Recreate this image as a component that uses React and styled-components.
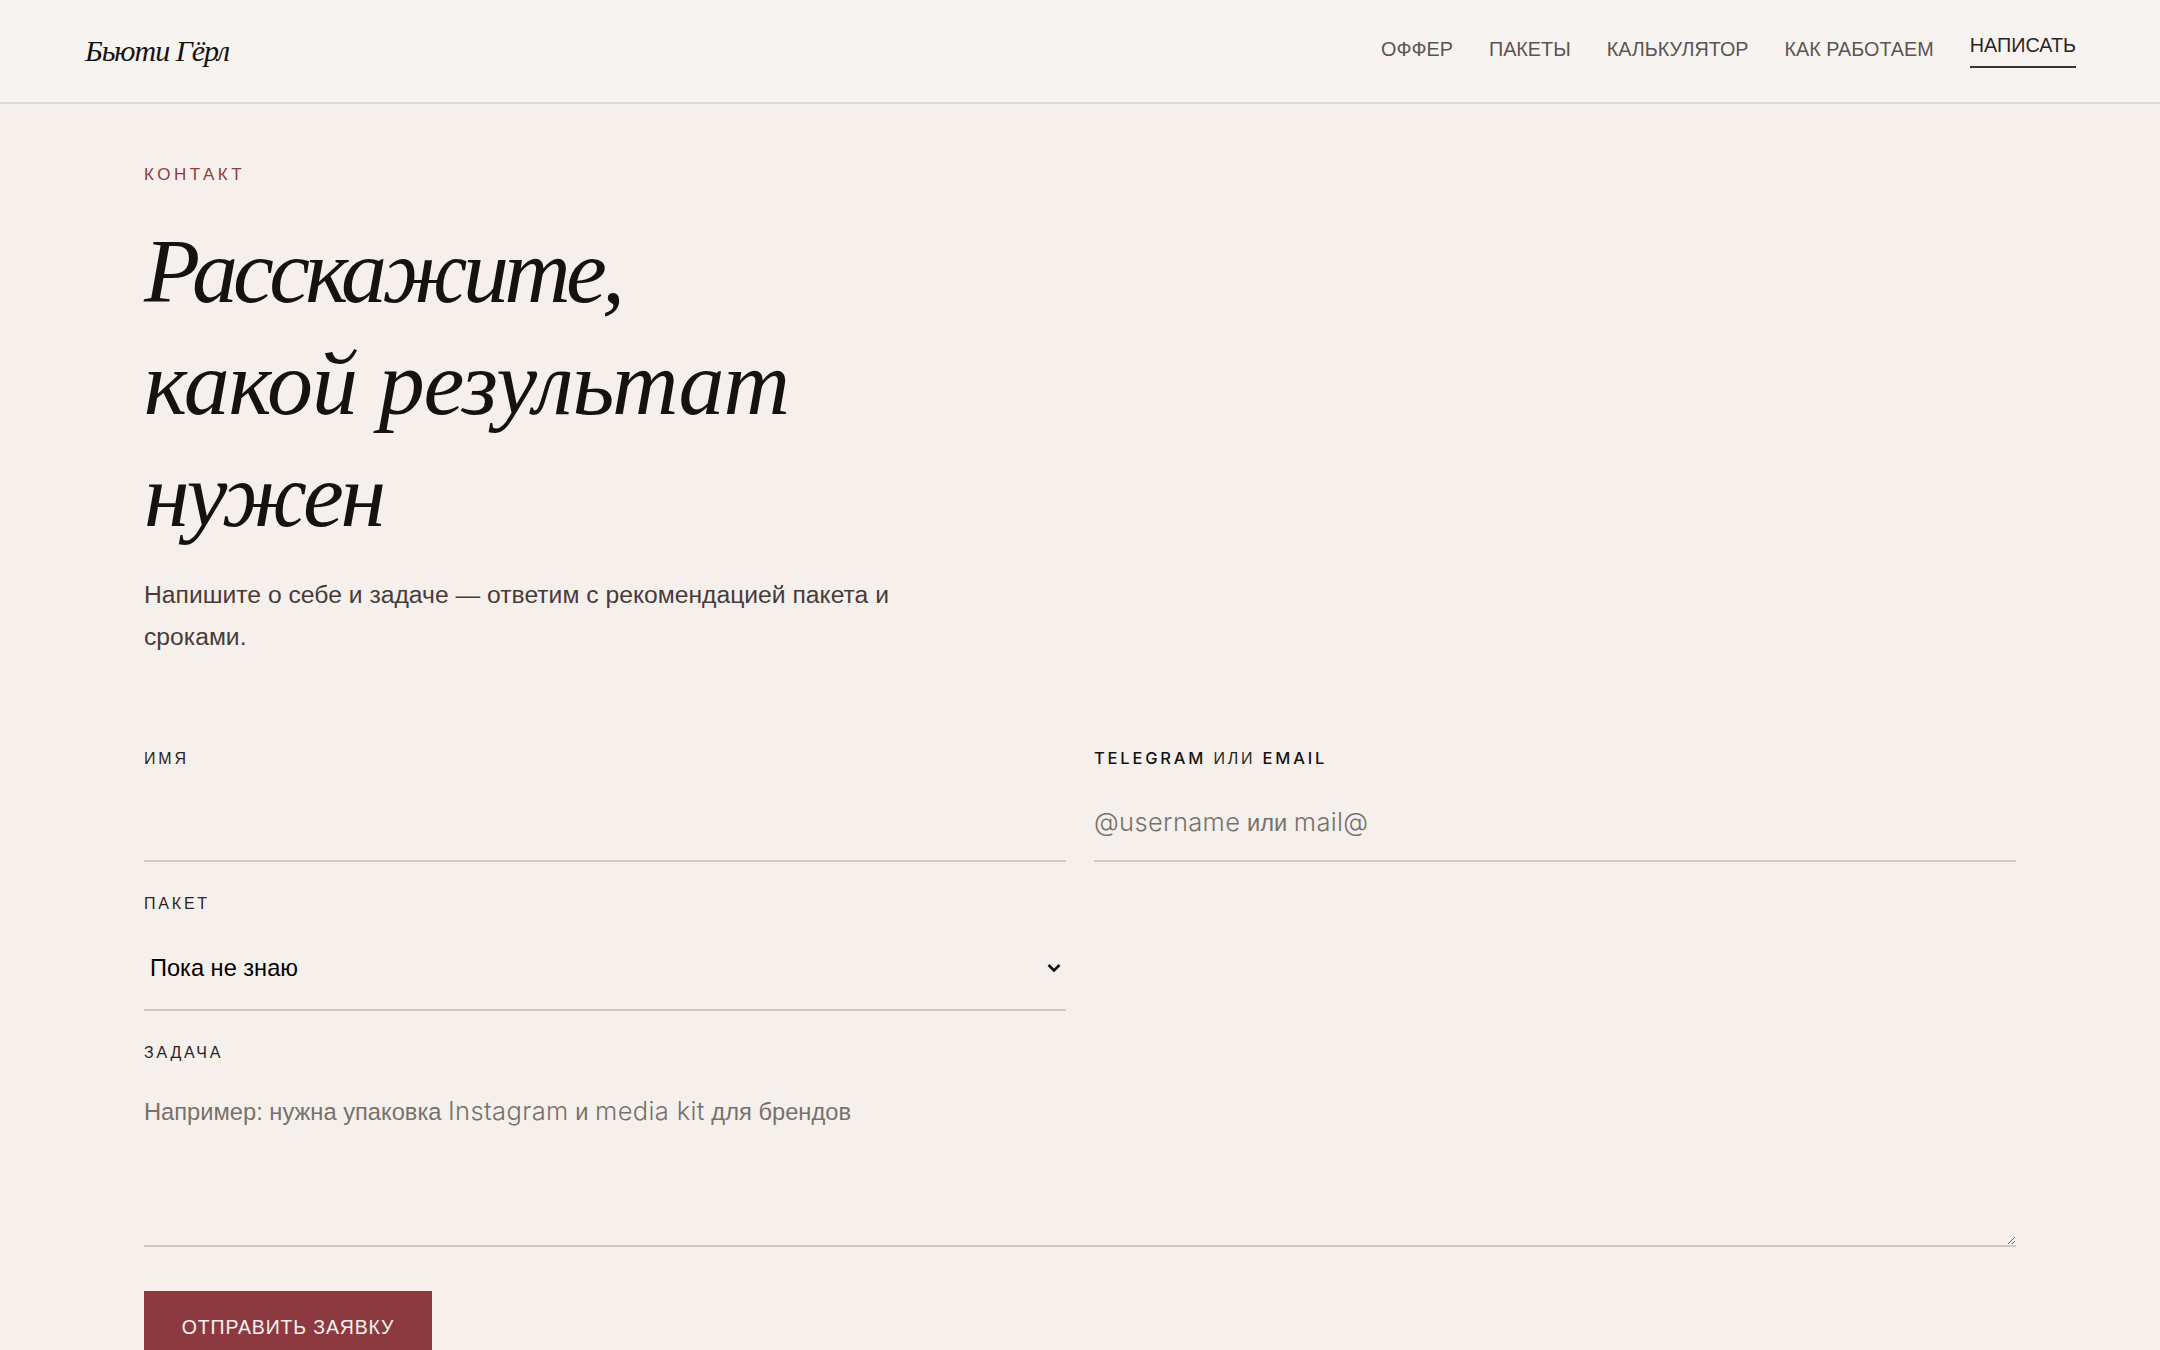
import React from 'react';
import styled, { createGlobalStyle } from 'styled-components';

const GlobalStyle = createGlobalStyle`
  html, body {
    margin: 0;
    padding: 0;
    background: #f5f0ec;
    overflow: hidden;
  }
  * {
    box-sizing: border-box;
  }
`;

const Page = styled.div`
  height: 1350px;
  overflow: hidden;
  font-family: "Liberation Sans", Arial, sans-serif;
  color: #161210;
`;

const Header = styled.header`
  display: flex;
  align-items: center;
  justify-content: space-between;
  height: 104px;
  padding: 0 84px 0 85px;
  background: #f7f3f0;
  border-bottom: 2px solid #dcd8d4;
`;

const Logo = styled.a`
  font-family: "Liberation Serif", serif;
  font-style: italic;
  font-size: 30px;
  letter-spacing: -1px;
  color: #161210;
`;

const Nav = styled.nav`
  display: flex;
  align-items: center;
  gap: 36px;
  margin-bottom: 4px;
`;

const NavLink = styled.a`
  display: block;
  font-size: 19.8px;
  line-height: 30px;
  padding-bottom: ${p => (p.$active ? '6px' : '0')};
  border-bottom: ${p => (p.$active ? '2px solid #3a3431' : '0')};
  color: ${p => (p.$active ? '#2b2522' : '#5c5450')};
`;

const Main = styled.main`
  padding: 60px 144px 0;
`;

const Eyebrow = styled.div`
  font-size: 17px;
  line-height: 22px;
  letter-spacing: 3.5px;
  color: #8f3b42;
`;

const Title = styled.h1`
  margin: 29px 0 0;
  font-family: "Liberation Serif", serif;
  font-style: italic;
  font-weight: 400;
  font-size: 92px;
  line-height: 112px;
  color: #161210;
`;

const TitleLine = styled.span`
  display: block;
  letter-spacing: ${p => p.$tracking}px;
`;

const Lead = styled.p`
  margin: 23px 0 0;
  max-width: 780px;
  font-size: 24.7px;
  line-height: 42px;
  color: #4a3a3a;
`;

const Form = styled.form`
  display: grid;
  grid-template-columns: 1fr 1fr;
  column-gap: 28px;
  row-gap: 32px;
  margin-top: 91px;
`;

const Field = styled.label`
  display: block;
  grid-column: ${p => (p.$wide ? '1 / -1' : 'auto')};
`;

const LabelText = styled.span`
  display: block;
  font-size: 16px;
  line-height: 20px;
  letter-spacing: 2.8px;
  color: #2b2522;
`;

const LatinWord = styled.span`
  font-family: Inter, sans-serif;
  font-weight: 500;
  font-size: 16.5px;
  line-height: 0;
  color: #161210;
`;

const Control = styled.span`
  display: block;
  position: relative;
`;

const lineField = `
  display: block;
  width: 100%;
  border: 0;
  border-bottom: 2px solid #cfcac5;
  border-radius: 0;
  background: transparent;
  outline: none;
  font-family: "Liberation Sans", sans-serif;
  font-size: 24.7px;
  color: #161210;
`;

const TextInput = styled.input`
  ${lineField}
  height: 93px;
  padding: 14px 0 0;
`;

const TextArea = styled.textarea`
  ${lineField}
  height: 184px;
  padding: 33px 0 0;
  resize: vertical;
`;

const Hint = styled.span`
  position: absolute;
  left: 0;
  top: ${p => p.$top}px;
  font-size: 23.7px;
  line-height: 30px;
  color: #77716d;
  pointer-events: none;
  white-space: pre;
  input:not(:placeholder-shown) ~ &,
  textarea:not(:placeholder-shown) ~ & {
    display: none;
  }
`;

const HintLatin = styled.span`
  font-family: Inter, sans-serif;
  font-weight: 300;
  font-size: 25.5px;
  letter-spacing: 0.35px;
`;

const Select = styled.select`
  ${lineField}
  appearance: none;
  height: 85px;
  margin-top: 12px;
  padding: 0 0 0 6px;
  font-size: 23.6px;
  color: #000;
`;

const Chevron = styled.svg`
  position: absolute;
  right: 5px;
  top: 37px;
  width: 14px;
  height: 10px;
  pointer-events: none;
`;

const Submit = styled.button`
  display: block;
  margin-top: 44px;
  width: 288px;
  height: 72px;
  padding: 0;
  border: 0;
  background: #8c3a40;
  color: #f7f3ef;
  font-family: "Liberation Sans", sans-serif;
  font-size: 19.5px;
  letter-spacing: 0.85px;
`;

export default function App() {
  return (
    <Page>
      <GlobalStyle />
      <Header>
        <Logo>Бьюти Гёрл</Logo>
        <Nav>
          <NavLink>ОФФЕР</NavLink>
          <NavLink>ПАКЕТЫ</NavLink>
          <NavLink>КАЛЬКУЛЯТОР</NavLink>
          <NavLink>КАК РАБОТАЕМ</NavLink>
          <NavLink $active>НАПИСАТЬ</NavLink>
        </Nav>
      </Header>
      <Main>
        <Eyebrow>КОНТАКТ</Eyebrow>
        <Title>
          <TitleLine $tracking={-4.8}>Расскажите,</TitleLine>
          <TitleLine $tracking={-1.1}>какой результат</TitleLine>
          <TitleLine $tracking={-3.2}>нужен</TitleLine>
        </Title>
        <Lead>Напишите о себе и задаче — ответим с рекомендацией пакета и сроками.</Lead>
        <Form>
          <Field>
            <LabelText>ИМЯ</LabelText>
            <TextInput type="text" />
          </Field>
          <Field>
            <LabelText>
              <LatinWord>TELEGRAM</LatinWord> ИЛИ <LatinWord>EMAIL</LatinWord>
            </LabelText>
            <Control>
              <TextInput type="text" placeholder=" " />
              <Hint $top={38}>
                <HintLatin>@username</HintLatin> или <HintLatin>mail@</HintLatin>
              </Hint>
            </Control>
          </Field>
          <Field>
            <LabelText>ПАКЕТ</LabelText>
            <Control>
              <Select defaultValue="unknown">
                <option value="unknown">Пока не знаю</option>
              </Select>
              <Chevron viewBox="0 0 14 10" fill="none" stroke="#111" strokeWidth="2.6">
                <path d="M1.5 2 L7 7.5 L12.5 2" />
              </Chevron>
            </Control>
          </Field>
          <span />
          <Field $wide>
            <LabelText>ЗАДАЧА</LabelText>
            <Control>
              <TextArea placeholder=" " />
              <Hint $top={33}>
                Например: нужна упаковка <HintLatin>Instagram</HintLatin> и{' '}
                <HintLatin>media kit</HintLatin> для брендов
              </Hint>
            </Control>
          </Field>
        </Form>
        <Submit type="button">ОТПРАВИТЬ ЗАЯВКУ</Submit>
      </Main>
    </Page>
  );
}
